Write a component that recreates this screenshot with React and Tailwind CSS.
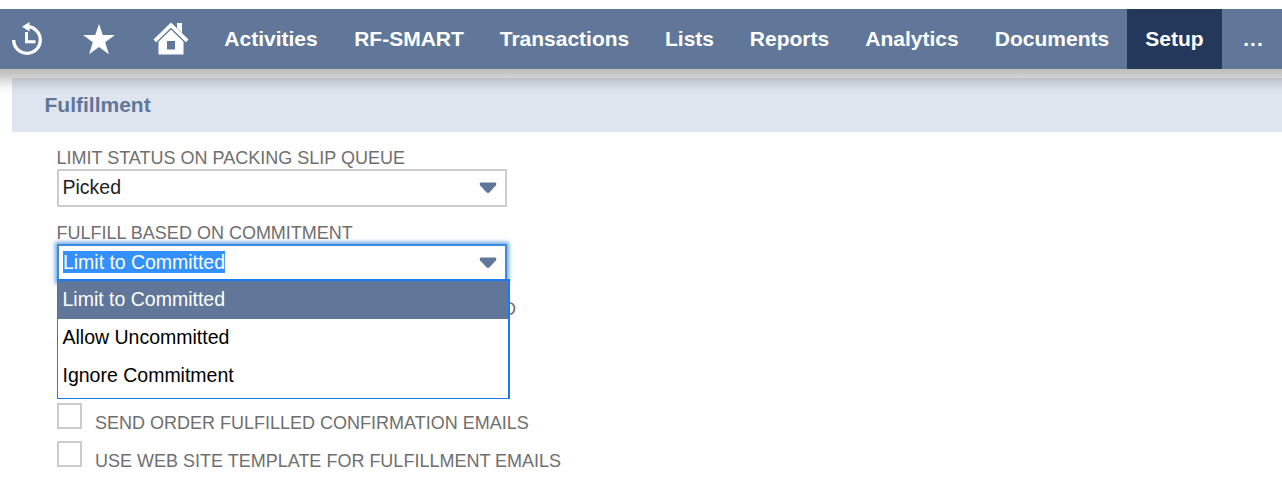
const NAV = [
  { label: 'Activities', w: 'w-[130px]' },
  { label: 'RF-SMART', w: 'w-[146px]' },
  { label: 'Transactions', w: 'w-[165px]' },
  { label: 'Lists', w: 'w-[85px]' },
  { label: 'Reports', w: 'w-[115px]' },
  { label: 'Analytics', w: 'w-[130px]' },
  { label: 'Documents', w: 'w-[150px]' },
  { label: 'Setup', w: 'w-[95px]', active: true },
  { label: '...', w: 'w-[60px] pl-[3px] tracking-[1px]' },
];

const OPTIONS = ['Limit to Committed', 'Allow Uncommitted', 'Ignore Commitment'];

function HistoryIcon() {
  return (
    <svg width="32" height="34" viewBox="0 0 32 34" fill="none" stroke="white">
      <path d="M1.7 18A13.3 13.3 0 1 0 15 4.7" strokeWidth="3.3" />
      <path d="M10 4.7 17.5 0V9.4Z" fill="white" stroke="none" />
      <path d="M14.5 10V19.8H23.5" strokeWidth="2.9" />
    </svg>
  );
}

function StarIcon() {
  return (
    <svg width="32" height="32" viewBox="0 0 32 32" fill="white">
      <path d="M16 1 19.8 12H32L22.2 19.2 25.9 31.2 16 24 6.1 31.2 9.8 19.2 0 12H12.2Z" />
    </svg>
  );
}

function HomeIcon() {
  return (
    <svg width="36" height="34" viewBox="0 0 36 34" fill="white">
      <path d="M24 1H29V11L24 6Z" />
      <path d="M1.8 18.8 18 3.2 34.2 18.8" fill="none" stroke="white" strokeWidth="3.8" />
      <path fillRule="evenodd" d="M18 7.6 30.5 19.6V32.5H5.5V19.6ZM14 19V27.5H22V19Z" />
      <path d="M4.5 19.8 18 6.8 31.5 19.8" fill="none" stroke="#607799" strokeWidth="0.8" />
    </svg>
  );
}

function Arrow() {
  return (
    <svg width="18" height="12" viewBox="0 0 18 12" fill="#607799">
      <path d="M1.5 0.5H16.5Q18 1.2 17 3.2L10.6 10.2Q9 11.6 7.4 10.2L1 3.2Q0 1.2 1.5 0.5Z" />
    </svg>
  );
}

function Label({ children }) {
  return <div className="-ml-[0.5px] h-[25px] pt-[3px] text-[18px] leading-[22px] whitespace-nowrap text-[#6f6f6f]">{children}</div>;
}

function Check({ children }) {
  return (
    <div className="flex h-[38px] items-start">
      <span className="h-[26px] w-[25px] border-2 border-[#ccc] bg-white" />
      <span className="ml-[13px] pt-[9px] text-[18px] leading-[22px] whitespace-nowrap text-[#6f6f6f]">{children}</span>
    </div>
  );
}

export default function App() {
  return (
    <div className="h-[486px] w-[1282px] overflow-hidden bg-white pt-[9px] font-['Liberation_Sans',Arial,sans-serif]">
      <nav className="relative z-10 flex h-[60px] bg-[#607799] text-white">
        <div className="flex w-[206px] items-center">
          <span className="ml-[12px] w-[71px]"><HistoryIcon /></span>
          <span className="w-[70px]"><StarIcon /></span>
          <HomeIcon />
        </div>
        {NAV.map((n) => (
          <a key={n.label} className={`flex items-center justify-center text-[21px] font-bold ${n.w} ${n.active ? 'bg-[#24385b]' : ''}`}>
            {n.label}
          </a>
        ))}
        <div className="absolute top-full left-0 h-[27px] w-full bg-[linear-gradient(to_bottom,rgba(0,0,0,0.25)_0,rgba(0,0,0,0.23)_4px,rgba(0,0,0,0.17)_9px,rgba(0,0,0,0.08)_15px,rgba(0,0,0,0.02)_21px,transparent_27px)]" />
      </nav>

      <h2 className="mt-[9px] ml-3 flex h-[54px] items-center bg-[#dfe5ef] pl-[32.5px] text-[21px] font-bold text-[#607799]">Fulfillment</h2>

      <main className="pt-[12px] pl-[57px]">
        <Label>LIMIT STATUS ON PACKING SLIP QUEUE</Label>
        <div className="flex h-[38px] w-[450px] items-center justify-between border-2 border-[#ccc] pr-[8px] pl-[3.5px] text-[19.5px] text-[#222]">
          <span>Picked</span>
          <Arrow />
        </div>

        <div className="mt-[12px]">
          <Label>FULFILL BASED ON COMMITMENT</Label>
        </div>
        <div className="relative h-[159px] w-[510px]">
          <div className="flex h-[38px] w-[450px] items-center justify-between border-2 border-[#3d8bdc] pr-[8px] pl-[4px] text-[19.5px] shadow-[0_0_4px_2px_rgba(61,139,220,0.75)]">
            <span className="mb-[2px] bg-[#3390ff] leading-[22px] tracking-[-0.03px] text-white">Limit to Committed</span>
            <Arrow />
          </div>
          <div className="mt-[16px] w-[459px] text-right text-[18px] leading-[22px] text-[#6f6f6f]">D</div>
          <ul className="absolute top-[35px] left-0 h-[120px] w-[453px] border border-t-2 border-r-2 border-[#1a7af0] bg-white text-[19.5px] text-black">
            {OPTIONS.map((o, i) => (
              <li key={o} className={`flex h-[38px] items-center pl-[4.5px] ${i === 0 ? 'bg-[#607799] text-white' : ''}`}>{o}</li>
            ))}
          </ul>
        </div>

        <Check>SEND ORDER FULFILLED CONFIRMATION EMAILS</Check>
        <Check>USE WEB SITE TEMPLATE FOR FULFILLMENT EMAILS</Check>
      </main>
    </div>
  );
}
